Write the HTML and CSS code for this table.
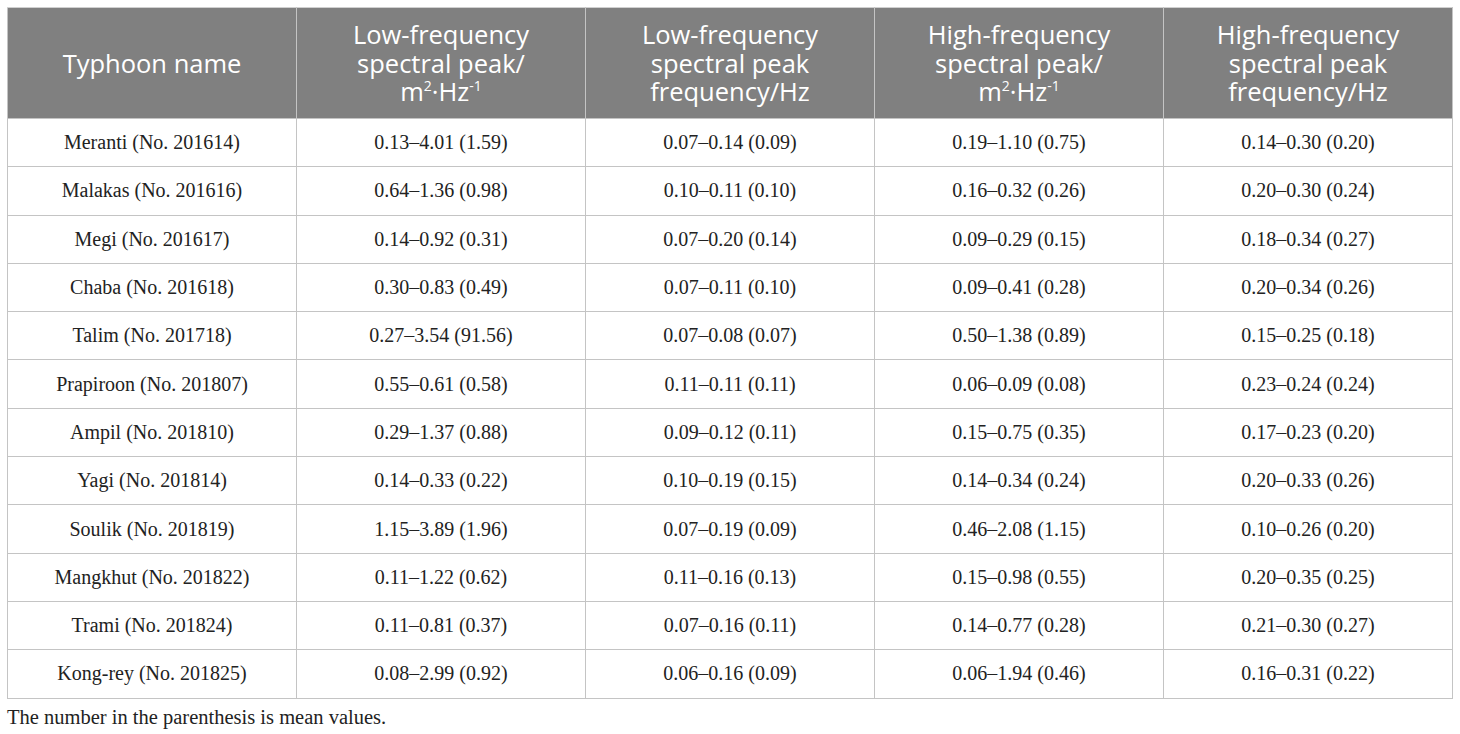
FILE: index.html
```html
<!DOCTYPE html>
<html lang="en">
<head>
  <meta charset="UTF-8">
  <title>Typhoon spectral peaks</title>
  <link rel="stylesheet" href="styles.css">
</head>
<body>
  <table class="data">
    <thead>
      <tr>
        <th>Typhoon name</th>
        <th>Low-frequency<br>spectral peak/<br>m<sup>2</sup>·Hz<sup>-1</sup></th>
        <th>Low-frequency<br>spectral peak<br>frequency/Hz</th>
        <th>High-frequency<br>spectral peak/<br>m<sup>2</sup>·Hz<sup>-1</sup></th>
        <th>High-frequency<br>spectral peak<br>frequency/Hz</th>
      </tr>
    </thead>
    <tbody>
      <tr><td>Meranti (No. 201614)</td><td>0.13–4.01 (1.59)</td><td>0.07–0.14 (0.09)</td><td>0.19–1.10 (0.75)</td><td>0.14–0.30 (0.20)</td></tr>
      <tr><td>Malakas (No. 201616)</td><td>0.64–1.36 (0.98)</td><td>0.10–0.11 (0.10)</td><td>0.16–0.32 (0.26)</td><td>0.20–0.30 (0.24)</td></tr>
      <tr><td>Megi (No. 201617)</td><td>0.14–0.92 (0.31)</td><td>0.07–0.20 (0.14)</td><td>0.09–0.29 (0.15)</td><td>0.18–0.34 (0.27)</td></tr>
      <tr><td>Chaba (No. 201618)</td><td>0.30–0.83 (0.49)</td><td>0.07–0.11 (0.10)</td><td>0.09–0.41 (0.28)</td><td>0.20–0.34 (0.26)</td></tr>
      <tr><td>Talim (No. 201718)</td><td>0.27–3.54 (91.56)</td><td>0.07–0.08 (0.07)</td><td>0.50–1.38 (0.89)</td><td>0.15–0.25 (0.18)</td></tr>
      <tr><td>Prapiroon (No. 201807)</td><td>0.55–0.61 (0.58)</td><td>0.11–0.11 (0.11)</td><td>0.06–0.09 (0.08)</td><td>0.23–0.24 (0.24)</td></tr>
      <tr><td>Ampil (No. 201810)</td><td>0.29–1.37 (0.88)</td><td>0.09–0.12 (0.11)</td><td>0.15–0.75 (0.35)</td><td>0.17–0.23 (0.20)</td></tr>
      <tr><td>Yagi (No. 201814)</td><td>0.14–0.33 (0.22)</td><td>0.10–0.19 (0.15)</td><td>0.14–0.34 (0.24)</td><td>0.20–0.33 (0.26)</td></tr>
      <tr><td>Soulik (No. 201819)</td><td>1.15–3.89 (1.96)</td><td>0.07–0.19 (0.09)</td><td>0.46–2.08 (1.15)</td><td>0.10–0.26 (0.20)</td></tr>
      <tr><td>Mangkhut (No. 201822)</td><td>0.11–1.22 (0.62)</td><td>0.11–0.16 (0.13)</td><td>0.15–0.98 (0.55)</td><td>0.20–0.35 (0.25)</td></tr>
      <tr><td>Trami (No. 201824)</td><td>0.11–0.81 (0.37)</td><td>0.07–0.16 (0.11)</td><td>0.14–0.77 (0.28)</td><td>0.21–0.30 (0.27)</td></tr>
      <tr><td>Kong-rey (No. 201825)</td><td>0.08–2.99 (0.92)</td><td>0.06–0.16 (0.09)</td><td>0.06–1.94 (0.46)</td><td>0.16–0.31 (0.22)</td></tr>
    </tbody>
  </table>
  <p class="note">The number in the parenthesis is mean values.</p>
</body>
</html>
```

FILE: styles.css
```css
body { margin: 0; padding: 7px 8px 0 7px; background: #fff; font-family: "Liberation Serif", serif; color: #222; }
.data { width: 1446px; border-collapse: collapse; table-layout: fixed; }
.data th { background: #808080; color: #fff; font-family: "Open Sans", sans-serif; font-weight: 400; font-size: 25.5px; line-height: 28.5px; height: 110px; padding: 0 8px; text-align: center; border: 1px solid #c4c4c4; border-top-color: #d0d0d0; }
.data th sup { font-size: 14px; line-height: 0; vertical-align: 10px; }
.data td { font-size: 20px; height: 47.3px; padding: 0 8px; text-align: center; border: 1px solid #c4c4c4; }
.note { margin: 7px 0 0; font-size: 20.5px; }
```
